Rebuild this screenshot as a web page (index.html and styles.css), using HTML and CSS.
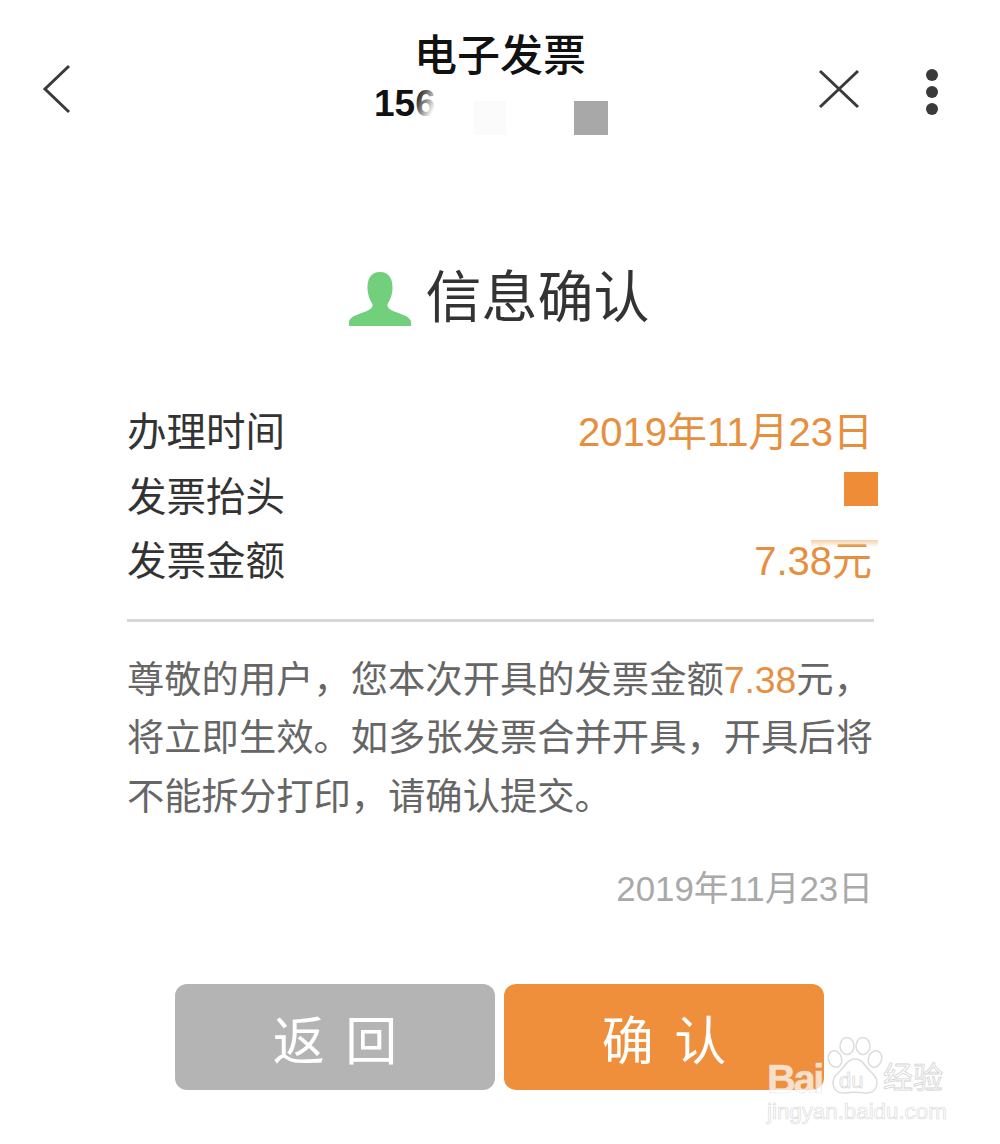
FILE: index.html
```html
<!DOCTYPE html>
<html lang="zh-CN">
<head>
<meta charset="utf-8">
<title>电子发票</title>
<link rel="stylesheet" href="styles.css">
</head>
<body>
<div class="page">
  <header class="topbar">
    <svg class="icon-back" width="30" height="50" viewBox="0 0 30 50"><path d="M28 2 L4 25 L28 48" fill="none" stroke="#3a3a3a" stroke-width="3"/></svg>
    <div class="titles">
      <div class="title">电子发票</div>
      <div class="phone"><span class="digits">156</span><span class="fade"></span><span class="mask-light"></span><span class="mask-gray"></span></div>
    </div>
    <div class="actions">
      <svg width="42" height="40" viewBox="0 0 42 40"><path d="M2 2 L40 38 M40 2 L2 38" fill="none" stroke="#3a3a3a" stroke-width="3"/></svg>
      <div class="dots"><i></i><i></i><i></i></div>
    </div>
  </header>

  <h1 class="heading">
    <svg width="64" height="54" viewBox="0 0 64 54"><path d="M32 0 C41 0 45 7 44.500 17 C44 24 42 28 39.500 32 C39 35 41 37 45 39 C52 42 60 43 63 49 L63 54 L1 54 L1 49 C4 43 12 42 19 39 C23 37 25 35 24.500 32 C22 28 20 24 19.500 17 C19 7 23 0 32 0 Z" fill="#72cf7c"/></svg>
    <span>信息确认</span>
  </h1>

  <section class="info">
    <div class="row"><span>办理时间</span><span class="val">2019年11月23日</span></div>
    <div class="row"><span>发票抬头</span><span class="val"><i class="orange-mask"></i></span></div>
    <div class="row"><span>发票金额</span><span class="val amount">7.38元<i class="band"></i></span></div>
  </section>

  <p class="notice">尊敬的用户，您本次开具的发票金额<em>7.38</em>元，将立即生效。如多张发票合并开具，开具后将不能拆分打印，请确认提交。</p>
  <div class="date">2019年11月23日</div>

  <div class="buttons">
    <button class="btn back">返 回</button>
    <button class="btn ok">确 认</button>
  </div>

  <div class="wm">
    <div class="wm-top">
      <span class="wm-bai">Bai</span>
      <div class="wm-pawbox">
        <svg width="56" height="58" viewBox="0 0 56 58"><g fill="none" stroke="#dcdcdc" stroke-width="1.500"><ellipse cx="8" cy="22" rx="6.500" ry="8.500" transform="rotate(-18 8 22)"/><ellipse cx="20" cy="9" rx="7" ry="8.500"/><ellipse cx="36" cy="9" rx="7" ry="8.500"/><ellipse cx="48" cy="22" rx="6.500" ry="8.500" transform="rotate(18 48 22)"/><path d="M28 22 C36 22 38 30 45 36 C54 44 50 57 38 56 C31 55 25 55 18 56 C6 57 2 44 11 36 C18 30 20 22 28 22 Z"/></g></svg>
        <span class="wm-du">du</span>
      </div>
      <span class="wm-cn">经验</span>
    </div>
    <div class="wm-url">jingyan.baidu.com</div>
  </div>
</div>
</body>
</html>
```
FILE: styles.css
```css
* { box-sizing: border-box; }
html, body { margin: 0; padding: 0; background: #fff; }
body { font-family: "Liberation Sans", "Noto Sans CJK SC", sans-serif; }
.page { position: relative; width: 1000px; height: 1144px; overflow: hidden; padding: 0 127px; color: #333; }

.topbar { display: grid; grid-template-columns: 1fr auto 1fr; align-items: start; margin: 0 -127px; padding: 31px 41px 0; height: 136px; }
.icon-back { margin-top: 33px; }
.titles { display: flex; flex-direction: column; align-items: center; }
.title { font-size: 43px; line-height: 50px; font-weight: 500; color: #111; }
.phone { position: relative; width: 234px; height: 44px; margin-right: 18px; font-size: 37px; line-height: 46px; font-weight: 700; color: #111; }
.fade { position: absolute; left: 42px; top: 0; width: 30px; height: 44px; background: linear-gradient(115deg, rgba(255,255,255,0) 12%, #fff 62%); }
.mask-light { position: absolute; left: 100px; top: 20px; width: 32px; height: 34px; background: #fbfbfb; }
.mask-gray { position: absolute; left: 200px; top: 20px; width: 34px; height: 34px; background: #a8a8a8; }
.actions { display: flex; align-items: flex-start; justify-content: flex-end; gap: 66px; padding: 38px 21px 0 0; }
.dots { display: flex; flex-direction: column; gap: 5px; }
.dots i { display: block; width: 12px; height: 12px; border-radius: 50%; background: #3a3a3a; }

.heading { display: flex; align-items: center; justify-content: center; gap: 14px; margin: 130px 0 0; padding-right: 3px; height: 64px; font-size: 56px; line-height: 64px; font-weight: 400; color: #333; }
.heading svg { margin-top: 2px; }

.info { margin-top: 70px; padding-bottom: 25px; border-bottom: 3px solid #d6d6d6; width: 747px; }
.row { display: flex; justify-content: space-between; height: 64.500px; line-height: 64px; font-size: 39.500px; color: #333; }
.val { color: #e68f3e; font-size: 40px; position: relative; padding-right: 1px; }
.orange-mask { display: block; width: 34px; height: 34px; background: #ef8c38; margin: 7px -5px 0 0; }
.amount { padding-right: 2px; }
.band { position: absolute; right: -4px; top: 11px; width: 67px; height: 7px; background: linear-gradient(#f6cfa9, rgba(255,255,255,0)); }

.notice { margin: 29px 0 0; width: 750px; font-size: 37.300px; line-height: 58.500px; color: #666; }
.notice em { font-style: normal; color: #e68f3e; }
.date { margin-top: 43px; width: 746px; text-align: right; font-size: 34.800px; line-height: 40px; color: #a9a9a9; }

.buttons { display: flex; gap: 9px; margin: 75px 0 0 48px; }
.btn { width: 320px; height: 106px; border: 0; border-radius: 12px; font: 400 52px "Liberation Sans", "Noto Sans CJK SC", sans-serif; color: #fff; word-spacing: 6px; }
.back { background: #b4b4b4; }
.ok { background: #ef8f3b; }

.wm { position: absolute; left: 767px; top: 1037px; width: 190px; }
.wm-top { display: flex; align-items: flex-start; height: 58px; }
.wm-bai { font-size: 40px; font-weight: 700; line-height: 40px; letter-spacing: -2.500px; margin-top: 22px; width: 60px; color: rgba(255,255,255,.72); -webkit-text-stroke: .6px rgba(225,225,225,.8); }
.wm-pawbox { position: relative; width: 56px; height: 58px; flex: none; }
.wm-du { position: absolute; left: 12px; top: 32px; font-size: 22px; line-height: 24px; color: #fff; -webkit-text-stroke: .6px #cfcfcf; }
.wm-cn { font-size: 30px; line-height: 34px; margin-top: 24px; color: #fff; -webkit-text-stroke: .8px #d4d4d4; white-space: nowrap; }
.wm-url { font-size: 22.300px; line-height: 28px; margin-top: 3px; color: #fff; -webkit-text-stroke: .7px #dcdcdc; white-space: nowrap; }
```
